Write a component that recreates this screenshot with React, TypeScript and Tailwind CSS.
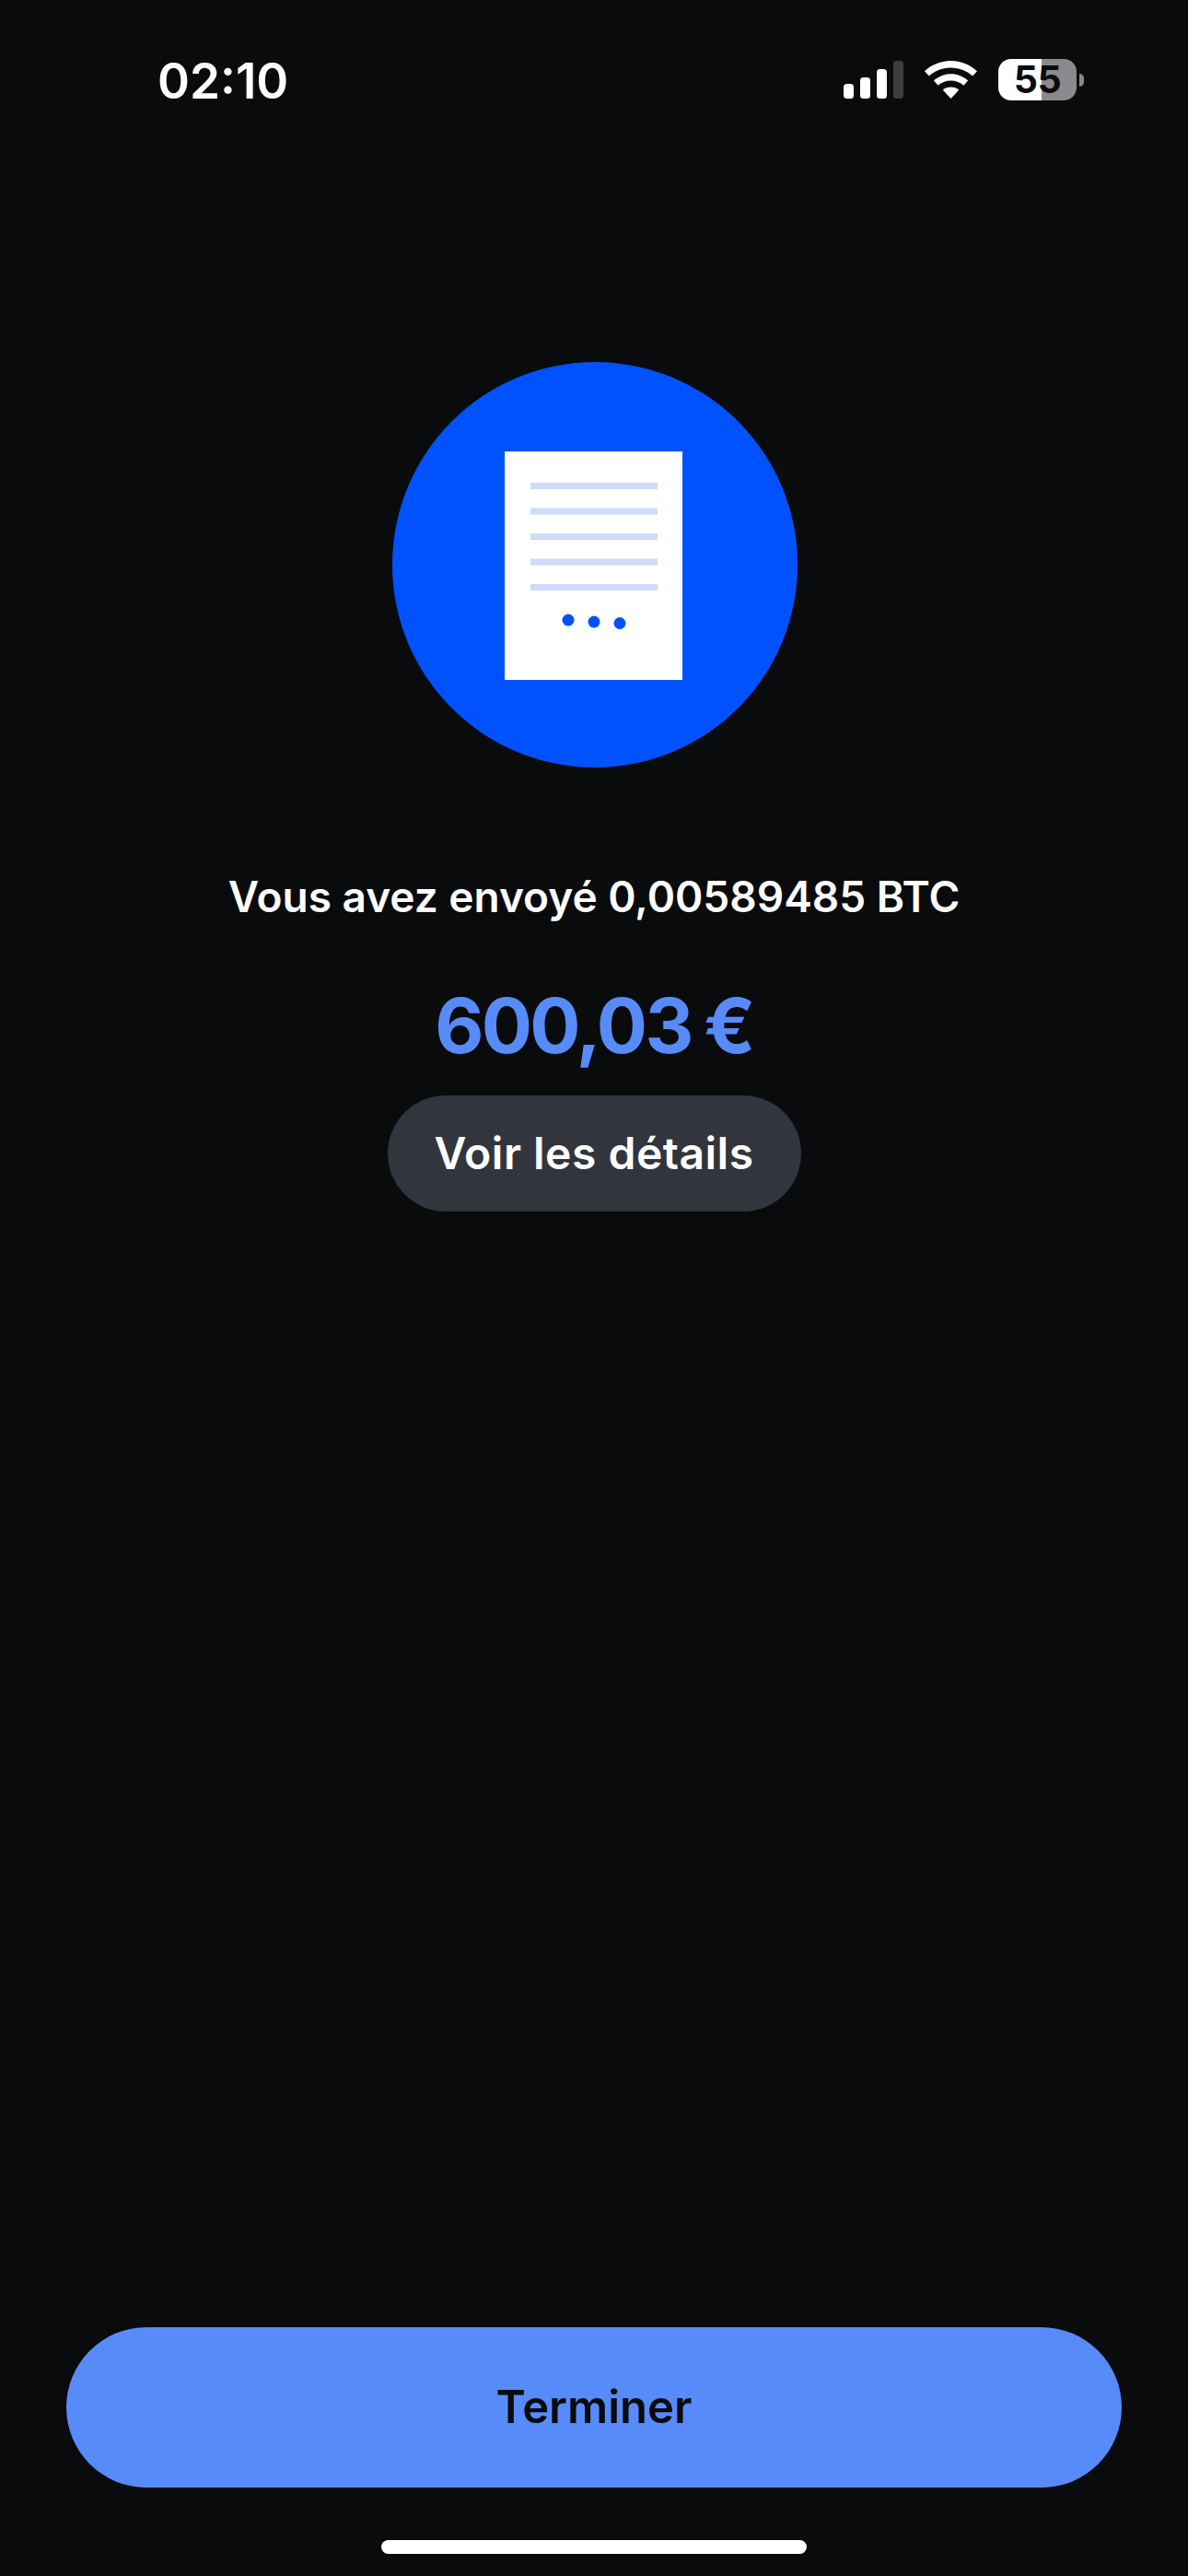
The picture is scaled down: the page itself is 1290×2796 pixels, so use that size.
const font = { fontFamily: 'Inter, "Liberation Sans", sans-serif' };

function SignalIcon() {
  return (
    <svg width="65" height="41" viewBox="0 0 65 41">
      <rect x="0" y="25" width="11" height="16" rx="3.5" fill="#fff" />
      <rect x="18" y="18" width="11" height="23" rx="3.5" fill="#fff" />
      <rect x="36" y="9" width="11" height="32" rx="3.5" fill="#fff" />
      <rect x="54" y="0" width="11" height="41" rx="3.5" fill="#3c3c3e" />
    </svg>
  );
}

function WifiIcon() {
  return (
    <svg width="57" height="41" viewBox="0 0 57 41" fill="#fff">
      <path d="M28.5 0C17.6 0 7.8 4.2 0 11.2L4.7 16.6C11 10.9 19.3 7.4 28.5 7.4S46 10.9 52.3 16.6L57 11.2C49.2 4.2 39.4 0 28.5 0Z" />
      <path d="M28.5 14.2C21.4 14.2 14.9 16.9 9.9 21.4L14.6 26.8C18.3 23.5 23.2 21.5 28.5 21.5S38.7 23.5 42.4 26.8L47.1 21.4C42.1 16.9 35.6 14.2 28.5 14.2Z" />
      <path d="M28.5 28.5C25.2 28.5 22.1 29.7 19.8 31.7L28.5 41L37.2 31.7C34.9 29.7 31.8 28.5 28.5 28.5Z" />
    </svg>
  );
}

function Battery() {
  return (
    <div className="flex items-center gap-[3px]">
      <div className="flex h-[45px] w-[85px] items-center justify-center rounded-[14px] bg-[linear-gradient(90deg,#ffffff_55%,#8a8a8c_55%)]">
        <span className="text-[41px] leading-none font-bold tracking-[-0.5px] text-[#0a0b0d]">55</span>
      </div>
      <div className="h-[14px] w-[5px] rounded-r-full bg-[#8a8a8c]" />
    </div>
  );
}

function ReceiptIllustration() {
  const lines = [524, 551.5, 579, 606.5, 634];
  return (
    <svg width="440" height="440" viewBox="426 393 440 440">
      <circle cx="646" cy="613" r="220" fill="#0052ff" />
      <rect x="548" y="490" width="193" height="248" fill="#fff" />
      {lines.map(y => (
        <rect key={y} x="576" y={y} width="138" height="7" fill="#d0dbfa" />
      ))}
      <circle cx="617" cy="673" r="6.5" fill="#0052ff" />
      <circle cx="645" cy="675" r="6.5" fill="#0052ff" />
      <circle cx="673" cy="676.500" r="6.5" fill="#0052ff" />
    </svg>
  );
}

export default function App() {
  return (
    <div className="flex h-[2796px] w-[1290px] flex-col bg-[#0a0b0d] text-white" style={font}>
      {/* Status bar */}
      <div className="mt-[64px] flex h-[45px] items-center justify-between pr-[113px] pl-[171px]">
        <span className="mt-[3px] text-[53px] leading-none font-semibold">02:10</span>
        <div className="flex items-center gap-[23px]">
          <SignalIcon />
          <WifiIcon />
          <Battery />
        </div>
      </div>

      <div className="flex flex-1 flex-col items-center">
        <div className="mt-[284px] ml-[2px]">
          <ReceiptIllustration />
        </div>
        <p className="mt-[110px] text-[46px] leading-[60px] font-semibold">
          Vous avez envoyé 0,00589485 BTC
        </p>
        <p className="mt-[61px] text-[82px] leading-[100px] font-bold tracking-[-2.7px] [word-spacing:-3px] text-[#578bfa]">
          600,03 €
        </p>
        <button className="mt-[25px] flex h-[126px] w-[449px] items-center justify-center rounded-full bg-[#32353d] text-[48px] font-semibold tracking-[0.5px]">
          Voir les détails
        </button>
      </div>

      {/* Bottom */}
      <div className="flex flex-col items-center px-[72px] pb-[24px]">
        <button className="flex h-[174px] w-full items-center justify-center rounded-full bg-[#578bfa] text-[49px] font-semibold text-[#0a0b0d]">
          Terminer
        </button>
        <div className="mt-[57px] h-[15px] w-[462px] rounded-full bg-white" />
      </div>
    </div>
  );
}
